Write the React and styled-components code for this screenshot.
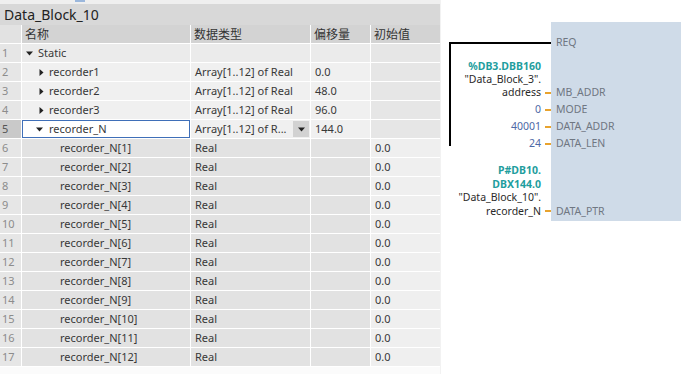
import React from 'react';
import styled, { createGlobalStyle } from 'styled-components';

const GlobalStyle = createGlobalStyle`
  html, body {
    margin: 0;
    padding: 0;
    background: #ffffff;
  }
  body {
    font-family: "Noto Sans", "Noto Sans CJK SC", sans-serif;
    color: #333;
  }
`;

const children = Array.from({ length: 12 }, (_, i) => ({
    name: 'recorder_N[' + (i + 1) + ']',
    type: 'Real',
    offset: '',
    start: '0.0'
}));

const DownArrow = () => (
    <svg width="7" height="5" viewBox="0 0 7 5"><path d="M0 0.5 L7 0.5 L3.5 4.5 Z" fill="#222" /></svg>
);

const RightArrow = () => (
    <svg width="5" height="7" viewBox="0 0 5 7"><path d="M0.5 0 L4.5 3.5 L0.5 7 Z" fill="#222" /></svg>
);

const App = () => {
    const rows = [
        { kind: 'static' },
        { kind: 'arr', name: 'recorder1', offset: '0.0' },
        { kind: 'arr', name: 'recorder2', offset: '48.0' },
        { kind: 'arr', name: 'recorder3', offset: '96.0' },
        { kind: 'sel', name: 'recorder_N', offset: '144.0' },
        ...children.map(c => ({ kind: 'child', ...c }))
    ];

    return (
        <>
            <GlobalStyle />
            <Page>
                <TablePanel>
                    <TopStrip><TabMark /></TopStrip>
                    <TitleBar>Data_Block_10</TitleBar>
                    <Grid>
                        <HeadNum />
                        <HeadCell>名称</HeadCell>
                        <HeadCell>数据类型</HeadCell>
                        <HeadCell>偏移量</HeadCell>
                        <HeadCell>初始值</HeadCell>
                        {rows.map((r, i) => {
                            const n = i + 1;
                            const child = r.kind === 'child';
                            const shade = child ? '#e2e2e2' : (r.kind === 'static' ? '#ebebeb' : '#f0f0f0');
                            const last = child ? '#efefef' : '#e6e6e6';
                            return (
                                <React.Fragment key={n}>
                                    <NumCell $sel={r.kind === 'sel'}>{n}</NumCell>
                                    {r.kind === 'static' && (
                                        <NameCell $bg={shade} $indent={4}><DownArrow /><span>Static</span></NameCell>
                                    )}
                                    {r.kind === 'arr' && (
                                        <NameCell $bg={shade} $indent={17}><RightArrow /><span>{r.name}</span></NameCell>
                                    )}
                                    {r.kind === 'sel' && (
                                        <NameCell $bg="#ffffff" $indent={14} $gap={6} $sel><DownArrow /><span>{r.name}</span></NameCell>
                                    )}
                                    {child && (
                                        <NameCell $bg={shade} $indent={38}><span>{r.name}</span></NameCell>
                                    )}
                                    {r.kind === 'static' && <Cell $bg={shade} />}
                                    {(r.kind === 'arr') && <Cell $bg={shade}>Array[1..12] of Real</Cell>}
                                    {r.kind === 'sel' && (
                                        <Cell $bg={shade}>
                                            <span>Array[1..12] of R...</span>
                                            <DropButton><DownArrow /></DropButton>
                                        </Cell>
                                    )}
                                    {child && <Cell $bg={shade}>{r.type}</Cell>}
                                    <Cell $bg={shade}>{r.kind === 'static' ? '' : r.offset}</Cell>
                                    <Cell $bg={last}>{child ? r.start : ''}</Cell>
                                </React.Fragment>
                            );
                        })}
                    </Grid>
                </TablePanel>
                <Diagram>
                    <Wire width="110" height="110" viewBox="0 0 110 110">
                        <path d="M1 104 L1 1 L102 1" stroke="#000" strokeWidth="2" fill="none" />
                    </Wire>
                    <PinRow>
                        <Label />
                        <StubCell />
                        <PinCell $lh={16}>REQ</PinCell>
                    </PinRow>
                    <PinRow>
                        <Label $top={10} $bottom={2} $lh={13}>
                            <Operand>%DB3.DBB160</Operand>
                            <Line>"Data_Block_3".</Line>
                            <Line>address</Line>
                        </Label>
                        <StubCell $off={2 + 13 / 2 - 1}><Stub /></StubCell>
                        <PinCell $lh={13} $bottom={2}>MB_ADDR</PinCell>
                    </PinRow>
                    {[['0', 'MODE'], ['40001', 'DATA_ADDR'], ['24', 'DATA_LEN']].map(([v, p]) => (
                        <PinRow key={p}>
                            <Label $lh={17}><Value>{v}</Value></Label>
                            <StubCell $off={17 / 2 - 1}><Stub /></StubCell>
                            <PinCell $lh={17}>{p}</PinCell>
                        </PinRow>
                    ))}
                    <PinRow>
                        <Label $top={12} $bottom={3} $lh={13.5}>
                            <Operand>P#DB10.</Operand>
                            <Operand>DBX144.0</Operand>
                            <Line>"Data_Block_10".</Line>
                            <Line>recorder_N</Line>
                        </Label>
                        <StubCell $off={3 + 13.5 / 2 - 1}><Stub /></StubCell>
                        <PinCell $lh={13.5} $bottom={3}>DATA_PTR</PinCell>
                    </PinRow>
                </Diagram>
            </Page>
        </>
    );
};

const Page = styled.div`
  display: flex;
  width: 687px;
  height: 374px;
  overflow: hidden;
`;

const TablePanel = styled.section`
  width: 440px;
  display: flex;
  flex-direction: column;
  background: #fbfbfb;
  border-right: 1px solid #f2f2f2;
`;

const TopStrip = styled.div`
  height: 4px;
  background: #efefef;
  position: relative;
`;

const TabMark = styled.div`
  position: absolute;
  left: 75px;
  top: 0;
  width: 10px;
  height: 2px;
  background: #9bb7dc;
`;

const TitleBar = styled.div`
  height: 21px;
  line-height: 21px;
  padding-left: 4px;
  background: #d8d8d8;
  font-size: 14px;
  color: #222;
`;

const Grid = styled.div`
  display: grid;
  grid-template-columns: 21px 168px 119px 59px 69px;
  grid-auto-rows: 18px;
  gap: 1px;
  background: #ffffff;
  padding-bottom: 1px;
  font-size: 11px;
  line-height: 18px;
  color: #383838;
`;

const HeadNum = styled.div`
  background: #e2e2e2;
`;

const HeadCell = styled.div`
  background: #d3d3d3;
  padding-left: 3px;
  font-size: 12px;
  font-family: "Noto Sans CJK SC", "Noto Sans", sans-serif;
  color: #333;
`;

const NumCell = styled.div`
  background: ${p => (p.$sel ? '#c9c9c9' : '#e6e6e6')};
  color: ${p => (p.$sel ? '#555' : '#8c8c8c')};
  padding-left: 2px;
`;

const NameCell = styled.div`
  display: flex;
  align-items: center;
  gap: ${p => p.$gap || 5}px;
  padding-left: ${p => p.$indent}px;
  background: ${p => p.$bg};
  box-shadow: ${p => (p.$sel ? 'inset 0 0 0 1px #3f6fb8' : 'none')};
  white-space: nowrap;
`;

const Cell = styled.div`
  display: flex;
  align-items: center;
  justify-content: space-between;
  padding-left: 4px;
  background: ${p => p.$bg};
  white-space: nowrap;
  overflow: hidden;
`;

const DropButton = styled.div`
  width: 16px;
  height: 16px;
  margin-right: 1px;
  display: flex;
  align-items: center;
  justify-content: center;
  background: #d2d2d2;
`;

const Diagram = styled.section`
  position: relative;
  flex: 1;
  display: flex;
  flex-direction: column;
  padding-top: 22px;
  background: #ffffff;
  font-size: 10.5px;
`;

const Wire = styled.svg`
  position: absolute;
  left: 8px;
  top: 42px;
`;

const PinRow = styled.div`
  display: grid;
  grid-template-columns: 100px 10px 130px;
`;

const Label = styled.div`
  display: flex;
  flex-direction: column;
  justify-content: flex-end;
  align-items: flex-end;
  padding-top: ${p => p.$top || 0}px;
  padding-bottom: ${p => p.$bottom || 0}px;
  line-height: ${p => p.$lh || 13}px;
  white-space: nowrap;
`;

const Operand = styled.span`
  color: #1f9e9e;
  font-weight: 700;
`;

const Line = styled.span`
  color: #2a2a2a;
`;

const Value = styled.span`
  color: #4d68a6;
`;

const StubCell = styled.div`
  display: flex;
  align-items: flex-end;
  justify-content: flex-end;
  padding-bottom: ${p => p.$off || 0}px;
`;

const Stub = styled.div`
  width: 6px;
  height: 2px;
  background: #e8a32e;
`;

const PinCell = styled.div`
  display: flex;
  align-items: flex-end;
  min-height: ${p => (p.$lh === 16 ? 28 : 0)}px;
  padding-left: 5px;
  padding-bottom: ${p => p.$bottom || 0}px;
  line-height: ${p => p.$lh}px;
  background: #cfdbe8;
  color: #6f7782;
`;

export default App;
